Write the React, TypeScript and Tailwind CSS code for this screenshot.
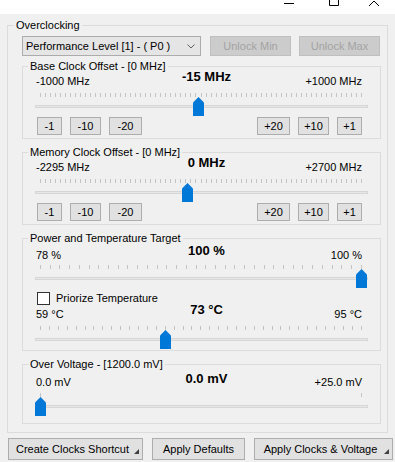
function Ticks({ count }: { count: number }) {
  return (
    <div className="flex h-[4px] justify-between pl-[17px] pr-[18px]">
      {Array.from({ length: count }).map((_, i) => (
        <div key={i} className="h-full w-px bg-[#c4c4c4]" />
      ))}
    </div>
  )
}

function Track({ frac }: { frac: number }) {
  return (
    <div className="relative h-[19px] pt-[8px]">
      <div className="mx-[12px] h-[3px] border border-[#d6d6d6] bg-[#e7e7e7]" />
      <svg className="absolute top-0" style={{ left: 12 + frac * 321 }} width="11" height="19" viewBox="0 0 11 19">
        <path d="M0 5.5 L5.5 0 L11 5.5 V19 H0 Z" fill="#0078d7" />
      </svg>
    </div>
  )
}

function Labels({ left, mid, right, rowCls, sideCls }: { left: string; mid: string; right: string; rowCls: string; sideCls: string }) {
  return (
    <div className={"grid h-[16px] grid-cols-3 pl-[13px] pr-[18px] " + rowCls}>
      <span className={"leading-[13px] " + sideCls}>{left}</span>
      <span className="pl-[15px] text-center text-[13px] font-bold leading-[15px]">{mid}</span>
      <span className={"text-right leading-[13px] " + sideCls}>{right}</span>
    </div>
  )
}

function Btn({ label, w }: { label: string; w: string }) {
  return (
    <button className={"flex h-[18px] items-center justify-center border border-[#adadad] bg-[#e1e1e1] leading-none " + w}>
      {label}
    </button>
  )
}

function StepButtons() {
  return (
    <div className="mt-[1px] flex justify-between pl-[14px] pr-[18px]">
      <div className="flex gap-[8px]">
        <Btn label="-1" w="w-[25px]" />
        <Btn label="-10" w="w-[31px]" />
        <Btn label="-20" w="w-[33px]" />
      </div>
      <div className="flex gap-[8px]">
        <Btn label="+20" w="w-[33px]" />
        <Btn label="+10" w="w-[31px]" />
        <Btn label="+1" w="w-[25px]" />
      </div>
    </div>
  )
}

function Group({ title, cls, children }: { title: string; cls: string; children: React.ReactNode }) {
  return (
    <fieldset className={"w-full border border-[#dcdcdc] " + cls}>
      <legend className="ml-[5px] px-[2px] leading-[13px]">{title}</legend>
      {children}
    </fieldset>
  )
}

function Grip() {
  return (
    <svg className="absolute bottom-[5px] right-[3px]" width="5" height="5" viewBox="0 0 5 5">
      <path d="M5 0 V5 H0 Z" fill="#404040" />
    </svg>
  )
}

export default function App() {
  return (
    <div className="h-[462px] w-[395px] overflow-hidden bg-[#f0f0f0] font-['Liberation_Sans',Arial,sans-serif] text-[11px] text-black">
      <div className="flex h-[14px] items-start bg-white">
        <svg className="ml-[284px] mt-[3px]" width="10" height="1" viewBox="0 0 10 1">
          <rect width="10" height="1" fill="#000" />
        </svg>
        <svg className="ml-[35px]" width="10" height="6" viewBox="0 0 10 6">
          <path d="M0.5 0 V5.5 H9.5 V0" fill="none" stroke="#000" strokeWidth="1" />
        </svg>
        <svg className="ml-[30px]" width="10" height="6" viewBox="0 0 10 6">
          <path d="M0 6 L5 1 L10 6" fill="none" stroke="#000" strokeWidth="1" />
        </svg>
      </div>

      <fieldset className="ml-[7px] mt-[5px] w-[381px] border border-[#dcdcdc]">
        <legend className="ml-[6px] px-[2px] leading-[13px]">Overclocking</legend>
        <div className="pb-[8px] pl-[14px] pr-[6px]">
          <div className="mt-[4px] flex h-[20px] gap-[9px]">
            <div className="flex w-[179px] items-center justify-between border border-[#acacac] bg-[#e5e5e5] pl-[3px] pr-[5px]">
              <span>Performance Level [1] - ( P0 )</span>
              <svg width="8" height="5" viewBox="0 0 8 5">
                <path d="M0.5 0.5 L4 4 L7.5 0.5" fill="none" stroke="#606060" strokeWidth="1" />
              </svg>
            </div>
            <button className="flex w-[81px] items-center justify-center border border-[#bfbfbf] bg-[#cccccc] text-[#a3a3a3]">Unlock Min</button>
            <button className="ml-[-1px] flex w-[81px] items-center justify-center border border-[#bfbfbf] bg-[#cccccc] text-[#a3a3a3]">Unlock Max</button>
          </div>

          <Group title="Base Clock Offset - [0 MHz]" cls="mt-[4px] pb-[3px]">
            <Labels left="-1000 MHz" mid="-15 MHz" right="+1000 MHz" rowCls="-mt-[4px]" sideCls="mt-[6px]" />
            <div className="mt-[8px]">
              <Ticks count={65} />
            </div>
            <Track frac={985 / 2000} />
            <StepButtons />
          </Group>

          <Group title="Memory Clock Offset - [0 MHz]" cls="mt-[7px] pb-[3px]">
            <Labels left="-2295 MHz" mid="0 MHz" right="+2700 MHz" rowCls="-mt-[4px]" sideCls="mt-[6px]" />
            <div className="mt-[8px]">
              <Ticks count={65} />
            </div>
            <Track frac={2295 / 4995} />
            <StepButtons />
          </Group>

          <Group title="Power and Temperature Target" cls="mt-[7px] pb-[1px]">
            <Labels left="78 %" mid="100 %" right="100 %" rowCls="-mt-[2px]" sideCls="mt-[6px]" />
            <div className="mt-[6px]">
              <Ticks count={34} />
            </div>
            <Track frac={1} />
            <div className="mt-[3px] flex h-[14px] items-center gap-[6px] pl-[14px]">
              <div className="h-[13px] w-[13px] border border-[#333333] bg-white" />
              <span className="leading-[13px]">Priorize Temperature</span>
            </div>
            <Labels left="59 °C" mid="73 °C" right="95 °C" rowCls="-mt-[3px]" sideCls="mt-[6px]" />
            <div className="mt-[8px]">
              <Ticks count={37} />
            </div>
            <Track frac={14 / 36} />
          </Group>

          <Group title="Over Voltage - [1200.0 mV]" cls="mt-[7px] pb-[7px]">
            <Labels left="0.0 mV" mid="0.0 mV" right="+25.0 mV" rowCls="mt-0" sideCls="mt-[5px]" />
            <div className="mt-[6px]">
              <Ticks count={2} />
            </div>
            <Track frac={0} />
          </Group>
        </div>
      </fieldset>

      <div className="ml-[8px] mt-[5px] flex h-[22px] gap-[9px]">
        <button className="relative flex w-[135px] items-center justify-center border border-[#adadad] bg-[#e1e1e1] pr-[6px]">
          Create Clocks Shortcut
          <Grip />
        </button>
        <button className="flex w-[93px] items-center justify-center border border-[#adadad] bg-[#e1e1e1]">Apply Defaults</button>
        <button className="relative flex w-[139px] items-center justify-center border border-[#adadad] bg-[#e1e1e1] pr-[6px]">
          Apply Clocks &amp; Voltage
          <Grip />
        </button>
      </div>
    </div>
  )
}
